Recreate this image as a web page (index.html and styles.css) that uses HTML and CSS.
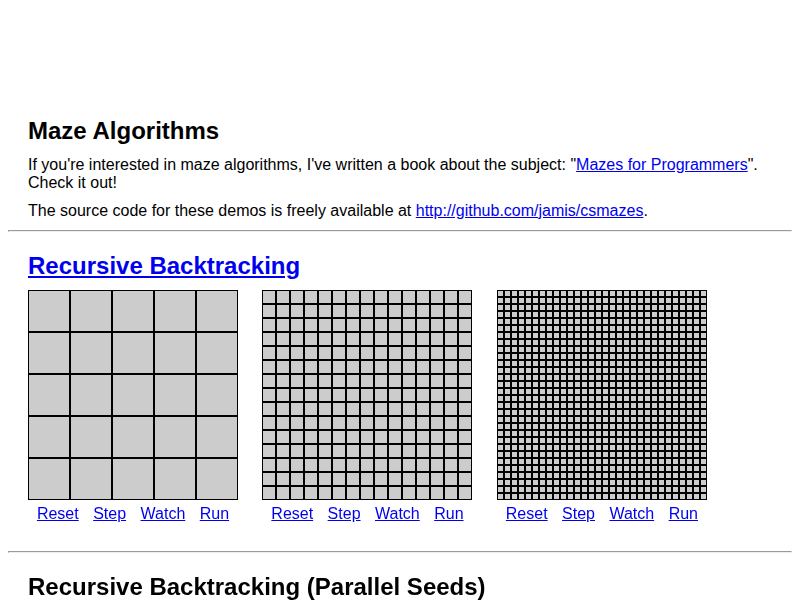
FILE: index.html
```html
<!DOCTYPE html>
<html lang="en">

<head>
    <meta charset="UTF-8">
    <title>Maze Algorithms</title>
    <link rel="stylesheet" href="styles.css">
</head>

<body>
    <div class="ad"></div>

    <div class="section intro">
        <h2>Maze Algorithms</h2>
        <p>If you're interested in maze algorithms, I've written a book about the subject: "<a href="#">Mazes for Programmers</a>". Check it out!</p>
        <p>The source code for these demos is freely available at <a href="#">http://github.com/jamis/csmazes</a>.</p>
    </div>

    <hr>

    <div class="section">
        <h2><a href="#">Recursive Backtracking</a></h2>
        <div class="demos">
            <div class="demo">
                <canvas width="210" height="210" data-cells="5"></canvas>
                <div class="links"><a href="#">Reset</a> <a href="#">Step</a> <a href="#">Watch</a> <a href="#">Run</a></div>
            </div>
            <div class="demo">
                <canvas width="210" height="210" data-cells="15"></canvas>
                <div class="links"><a href="#">Reset</a> <a href="#">Step</a> <a href="#">Watch</a> <a href="#">Run</a></div>
            </div>
            <div class="demo">
                <canvas width="210" height="210" data-cells="30"></canvas>
                <div class="links"><a href="#">Reset</a> <a href="#">Step</a> <a href="#">Watch</a> <a href="#">Run</a></div>
            </div>
        </div>
    </div>

    <hr>

    <div class="section">
        <h2>Recursive Backtracking (Parallel Seeds)</h2>
        <div class="demos">
            <div class="demo">
                <canvas width="210" height="210" data-cells="5"></canvas>
                <div class="links"><a href="#">Reset</a> <a href="#">Step</a> <a href="#">Watch</a> <a href="#">Run</a></div>
            </div>
        </div>
    </div>

    <script>
        // draw empty grids
        var canvases = document.querySelectorAll('canvas');

        for (var i = 0; i < canvases.length; i++) {
            var c = canvases[i];
            var n = parseInt(c.getAttribute('data-cells'), 10);
            var ctx = c.getContext('2d');
            var size = c.width / n;

            ctx.fillStyle = '#ccc';
            ctx.fillRect(0, 0, c.width, c.height);

            ctx.strokeStyle = '#000';
            ctx.lineWidth = 2;
            ctx.beginPath();
            for (var k = 0; k <= n; k++) {
                ctx.moveTo(k * size, 0);
                ctx.lineTo(k * size, c.height);
                ctx.moveTo(0, k * size);
                ctx.lineTo(c.width, k * size);
            }
            ctx.stroke();
        }
    </script>
</body>

</html>
```

FILE: styles.css
```css
body {
    margin: 8px;
    font-family: "Liberation Sans", Arial, sans-serif;
    font-size: 16px;
    color: #000;
    background: #fff;
}

a {
    color: #0000ee;
}

.ad {
    height: 89px;
}

.section {
    padding: 0 20px;
}

.section h2 {
    font-size: 24px;
    margin: 0.83em 0 10px;
}

.intro h2 {
    margin-bottom: 11px;
}

.section p {
    margin: 10px 0;
}

hr {
    margin: 10px 0 0;
}

.demos {
    margin-bottom: 28px;
}

.demo {
    display: inline-block;
    vertical-align: top;
    margin-right: 20px;
}

.demo canvas {
    display: block;
}

.links {
    text-align: center;
    margin-top: 5px;
}

.links a {
    margin: 0 5px;
}
```
